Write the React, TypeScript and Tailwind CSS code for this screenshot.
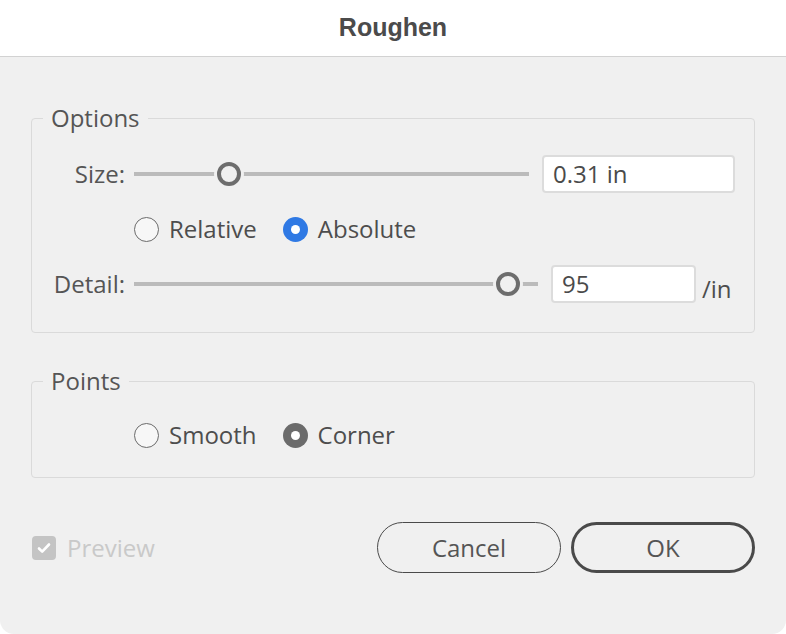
import React from 'react';

const font = { fontFamily: '"Open Sans", "Noto Sans", sans-serif' };

function Slider({ pos, className }: { pos: string; className: string }) {
  return (
    <div className={`relative h-[26px] flex items-center ${className}`}>
      <div className="h-[4px] w-full bg-[#bbbbbb]" />
      <div
        className={`absolute top-1/2 -translate-y-1/2 -translate-x-1/2 ${pos} w-[24px] h-[24px] rounded-full border-[4px] border-[#6d6d6d] bg-[#f0f0f0] shadow-[0_0_0_3px_#f0f0f0]`}
      />
    </div>
  );
}

function Radio({ label, checked, tone }: { label: string; checked?: boolean; tone?: 'blue' | 'gray' }) {
  let dot = 'border-[1.5px] border-[#6b6b6b] bg-[#f7f7f7]';
  if (checked && tone === 'blue') dot = 'bg-[#2f79e4]';
  if (checked && tone === 'gray') dot = 'bg-[#6b6b6b]';
  return (
    <div className="flex items-center gap-[10px]">
      <div className={`w-[25px] h-[25px] rounded-full flex items-center justify-center ${dot}`}>
        {checked && <div className="w-[9px] h-[9px] rounded-full bg-white" />}
      </div>
      <span className="text-[24px] leading-[26px] text-[#4d4d4d]">{label}</span>
    </div>
  );
}

export default function App() {
  return (
    <div className="w-[786px] h-[634px] bg-white" style={font}>
      {/* Title bar */}
      <div className="h-[57px] flex items-center justify-center border-b border-[#d2d2d2]">
        <span
          className="text-[25px] font-bold text-[#4b4b4b]"
          style={{ fontFamily: '"Liberation Sans", Arial, sans-serif' }}
        >
          Roughen
        </span>
      </div>

      <div className="h-[577px] bg-[#f0f0f0] rounded-b-[14px] px-[31px] pt-[47px]">
        {/* Options */}
        <fieldset className="border border-[#dadada] rounded-[4px] pl-[11px]">
          <legend className="px-2 text-[24px] leading-[28px] text-[#555555]">Options</legend>
          <div className="pl-[8px] pr-[19px] pt-[23px] pb-[29px]">
            <div className="h-[38px] flex items-center">
              <span className="w-[74px] text-right text-[24px] text-[#555555]">Size:</span>
              <Slider pos="left-[24%]" className="flex-1 ml-[9px]" />
              <div className="ml-[13px] w-[193px] h-[38px] bg-white border-2 border-[#dcdcdc] rounded-[4px] flex items-center pl-[9px] text-[24px] text-[#4a4a4a]">
                0.31 in
              </div>
            </div>
            <div className="mt-[23px] pl-[83px] flex items-center gap-[26px]">
              <Radio label="Relative" />
              <Radio label="Absolute" checked tone="blue" />
            </div>
            <div className="mt-[23px] h-[38px] flex items-center">
              <span className="w-[74px] text-right text-[24px] text-[#555555]">Detail:</span>
              <Slider pos="left-[92.6%]" className="flex-1 ml-[9px]" />
              <div className="ml-[13px] w-[145px] h-[38px] bg-white border-2 border-[#dcdcdc] rounded-[4px] flex items-center pl-[9px] text-[24px] text-[#4a4a4a]">
                95
              </div>
              <span className="ml-[6px] w-[33px] pt-[10px] text-[24px] text-[#4d4d4d]">/in</span>
            </div>
          </div>
        </fieldset>

        {/* Points */}
        <fieldset className="mt-[34px] border border-[#dadada] rounded-[4px] pl-[11px]">
          <legend className="px-2 text-[24px] leading-[28px] text-[#555555]">Points</legend>
          <div className="pl-[91px] pt-[27px] pb-[29px] flex items-center gap-[26px]">
            <Radio label="Smooth" />
            <Radio label="Corner" checked tone="gray" />
          </div>
        </fieldset>

        {/* Footer */}
        <div className="mt-[44px] flex items-center justify-between">
          <div className="flex items-center gap-[11px] pl-[1px]">
            <div className="w-[24px] h-[24px] rounded-[4px] bg-[#c4c4c4] flex items-center justify-center">
              <svg width="16" height="16" viewBox="0 0 16 16">
                <path d="M3 8.5l3.2 3.2L13 4.5" fill="none" stroke="white" strokeWidth="2.6" strokeLinecap="round" strokeLinejoin="round" />
              </svg>
            </div>
            <span className="text-[24px] text-[#c9c9c9]">Preview</span>
          </div>
          <div className="flex items-center gap-[10px]">
            <button className="w-[184px] h-[51px] rounded-full border-[1.5px] border-[#4a4a4a] text-[24px] text-[#555555]">
              Cancel
            </button>
            <button className="w-[184px] h-[51px] rounded-full border-[3px] border-[#4a4a4a] text-[24px] text-[#555555]">
              OK
            </button>
          </div>
        </div>
      </div>
    </div>
  );
}
